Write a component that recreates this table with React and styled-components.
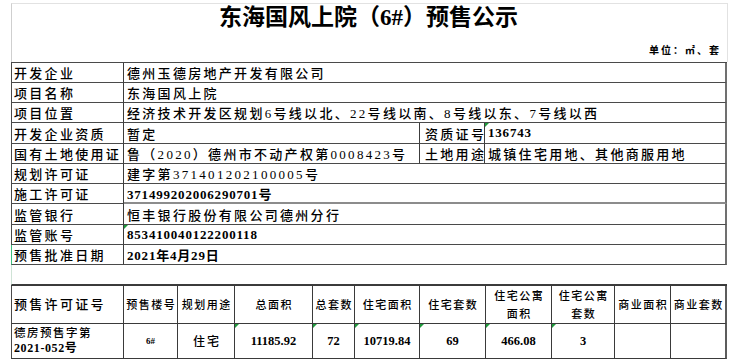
import React from "react";
import styled, { createGlobalStyle, css } from "styled-components";

const GlobalStyle = createGlobalStyle`
  html, body { margin: 0; padding: 0; background: #fff; }
  body {
    font-family: "Liberation Serif", "Noto Sans CJK SC", serif;
    color: #000;
  }
`;

const Sheet = styled.div`
  width: 740px;
  height: 364px;
  padding: 3px 0 0 11px;
  box-sizing: border-box;
  overflow: hidden;
`;

const TitleBlock = styled.div`
  width: 717px;
  height: 59px;
  box-sizing: border-box;
  border-top: 1px solid #e2e2e2;
  border-left: 1px solid #cfcfcf;
  border-right: 1px solid #e2e2e2;
  display: flex;
  flex-direction: column;
`;

const Title = styled.h1`
  margin: 0;
  font-size: 23px;
  line-height: 28px;
  font-weight: 700;
  text-align: center;
  padding-right: 2px;
`;

const Unit = styled.div`
  margin-top: 12px;
  padding-right: 6px;
  text-align: right;
  font-size: 10px;
  line-height: 14px;
  font-weight: 700;
  letter-spacing: 2px;
`;

const InfoTable = styled.div`
  width: 716px;
  border-top: 1px solid #4a4a4a;
`;

const InfoRow = styled.div`
  display: grid;
  grid-template-columns: 113px 296px 65px 242px;
  height: ${(p) => p.$h}px;
`;

const flagCss = css`
  position: relative;
  &::before {
    content: "";
    position: absolute;
    top: 0;
    left: 0;
    border-top: 4px solid #1f9a3c;
    border-right: 4px solid transparent;
  }
`;

const Cell = styled.div`
  box-sizing: border-box;
  display: flex;
  align-items: center;
  border-right: 1px solid #3c3c3c;
  border-bottom: 1px solid #4a4a4a;
  white-space: nowrap;
  overflow: hidden;
  ${(p) => p.$span && `grid-column: span ${p.$span};`}
  ${(p) => p.$first && `border-left: 1px solid ${p.$green ? "#3fbf7f" : "#4a4a4a"};`}
  ${(p) => p.$last && `border-right: 2px solid #707070;`}
  ${(p) => p.$thick && `border-bottom: 2px solid #8c8c8c;`}
  ${(p) => p.$flag && flagCss}
`;

const Label = styled.span`
  padding-left: ${(p) => p.$pad ?? 2}px;
  font-size: 13px;
  font-weight: 500;
  letter-spacing: 2.3px;
`;

const Value = styled.span`
  padding-left: 3px;
  font-size: 13px;
  font-weight: ${(p) => (p.$bold ? 700 : 500)};
  letter-spacing: ${(p) => (p.$bold ? "0.8px" : "2.3px")};
`;

const Gap = styled.div`
  height: 20px;
  border-left: 1px solid #cfe3d6;
  border-bottom: 1px solid #3c3c3c;
  width: 716px;
  box-sizing: border-box;
`;

const SaleTable = styled.div`
  width: 716px;
`;

const SaleRow = styled.div`
  display: grid;
  grid-template-columns: 113px 54px 57px 78px 42px 65px 66px 66px 63px 56px 56px;
  height: ${(p) => p.$h}px;
  box-sizing: border-box;
  ${(p) => p.$top && `border-top: 1px solid #3a3a3a;`}
`;

const SaleCell = styled.div`
  box-sizing: border-box;
  display: flex;
  flex-direction: column;
  justify-content: center;
  align-items: ${(p) => (p.$left ? "flex-start" : "center")};
  text-align: ${(p) => (p.$left ? "left" : "center")};
  border-right: 1px solid #3a3a3a;
  border-bottom: 1px solid #3a3a3a;
  overflow: hidden;
  ${(p) => p.$first && `border-left: 1px solid #4a4a4a;`}
  ${(p) => p.$last && `border-right: 2px solid #5c5c5c;`}
  ${(p) => p.$flag && flagCss}
`;

const HeadText = styled.span`
  font-size: ${(p) => (p.$big ? 13 : 11)}px;
  font-weight: 500;
  letter-spacing: ${(p) => (p.$big ? 2.3 : 1.5)}px;
  line-height: 18px;
  padding-left: ${(p) => (p.$big ? 2 : 1.5)}px;
  white-space: pre;
`;

const Num = styled.span`
  font-size: ${(p) => p.$size ?? 12.5}px;
  font-weight: 700;
  line-height: 15px;
`;

const Permit = styled.span`
  padding-left: 2px;
  font-size: 11.5px;
  font-weight: 500;
  letter-spacing: 1.5px;
  line-height: 15px;
`;

const PermitNo = styled.span`
  padding-left: 2px;
  font-size: 12px;
  font-weight: 700;
  letter-spacing: 0.6px;
  line-height: 15px;
`;

const Use = styled.span`
  font-size: 12px;
  font-weight: 500;
  letter-spacing: 2px;
  padding-left: 2px;
`;

const infoRows = [
  { h: 20, label: "开发企业", value: "德州玉德房地产开发有限公司" },
  { h: 20, label: "项目名称", value: "东海国风上院" },
  { h: 20, label: "项目位置", value: "经济技术开发区规划6号线以北、22号线以南、8号线以东、7号线以西" },
  { h: 21, label: "开发企业资质", value: "暂定", label2: "资质证号", value2: "136743", bold2: true, flag2: true },
  { h: 20, label: "国有土地使用证", value: "鲁（2020）德州市不动产权第0008423号", label2: "土地用途", value2: "城镇住宅用地、其他商服用地" },
  { h: 20, label: "规划许可证", value: "建字第371401202100005号" },
  { h: 20, label: "施工许可证", value: "371499202006290701号", bold: true, thick: true },
  { h: 21, label: "监管银行", value: "恒丰银行股份有限公司德州分行" },
  { h: 20, label: "监管账号", value: "853410040122200118", bold: true, flag: true },
  { h: 20, label: "预售批准日期", value: "2021年4月29日", bold: true, green: true },
];

const headers = [
  "预售楼号",
  "规划用途",
  "总面积",
  "总套数",
  "住宅面积",
  "住宅套数",
  "住宅公寓\n面积",
  "住宅公寓\n套数",
  "商业面积",
  "商业套数",
];

const numbers = ["11185.92", "72", "10719.84", "69", "466.08", "3"];

export default function App() {
  return (
    <>
      <GlobalStyle />
      <Sheet>
        <TitleBlock>
          <Title>东海国风上院（6#）预售公示</Title>
          <Unit>单位：㎡、套</Unit>
        </TitleBlock>

        <InfoTable>
          {infoRows.map((r) => (
            <InfoRow key={r.label} $h={r.h}>
              <Cell $first $green={r.green}>
                <Label>{r.label}</Label>
              </Cell>
              {r.label2 ? (
                <>
                  <Cell>
                    <Value $bold={r.bold}>{r.value}</Value>
                  </Cell>
                  <Cell>
                    <Label $pad={5}>{r.label2}</Label>
                  </Cell>
                  <Cell $last $flag={r.flag2}>
                    <Value $bold={r.bold2}>{r.value2}</Value>
                  </Cell>
                </>
              ) : (
                <Cell $span={3} $last $flag={r.flag} $thick={r.thick}>
                  <Value $bold={r.bold}>{r.value}</Value>
                </Cell>
              )}
            </InfoRow>
          ))}
        </InfoTable>

        <Gap />

        <SaleTable>
          <SaleRow $h={39} $top>
            <SaleCell $first $left>
              <HeadText $big>预售许可证号</HeadText>
            </SaleCell>
            {headers.map((h, i) => (
              <SaleCell key={h} $last={i === headers.length - 1}>
                <HeadText>{h}</HeadText>
              </SaleCell>
            ))}
          </SaleRow>
          <SaleRow $h={35}>
            <SaleCell $first $left>
              <Permit>德房预售字第</Permit>
              <PermitNo>2021-052号</PermitNo>
            </SaleCell>
            <SaleCell>
              <Num $size={9}>6#</Num>
            </SaleCell>
            <SaleCell>
              <Use>住宅</Use>
            </SaleCell>
            {numbers.map((n, i) => (
              <SaleCell key={i} $flag>
                <Num>{n}</Num>
              </SaleCell>
            ))}
            <SaleCell />
            <SaleCell $last />
          </SaleRow>
        </SaleTable>
      </Sheet>
    </>
  );
}
